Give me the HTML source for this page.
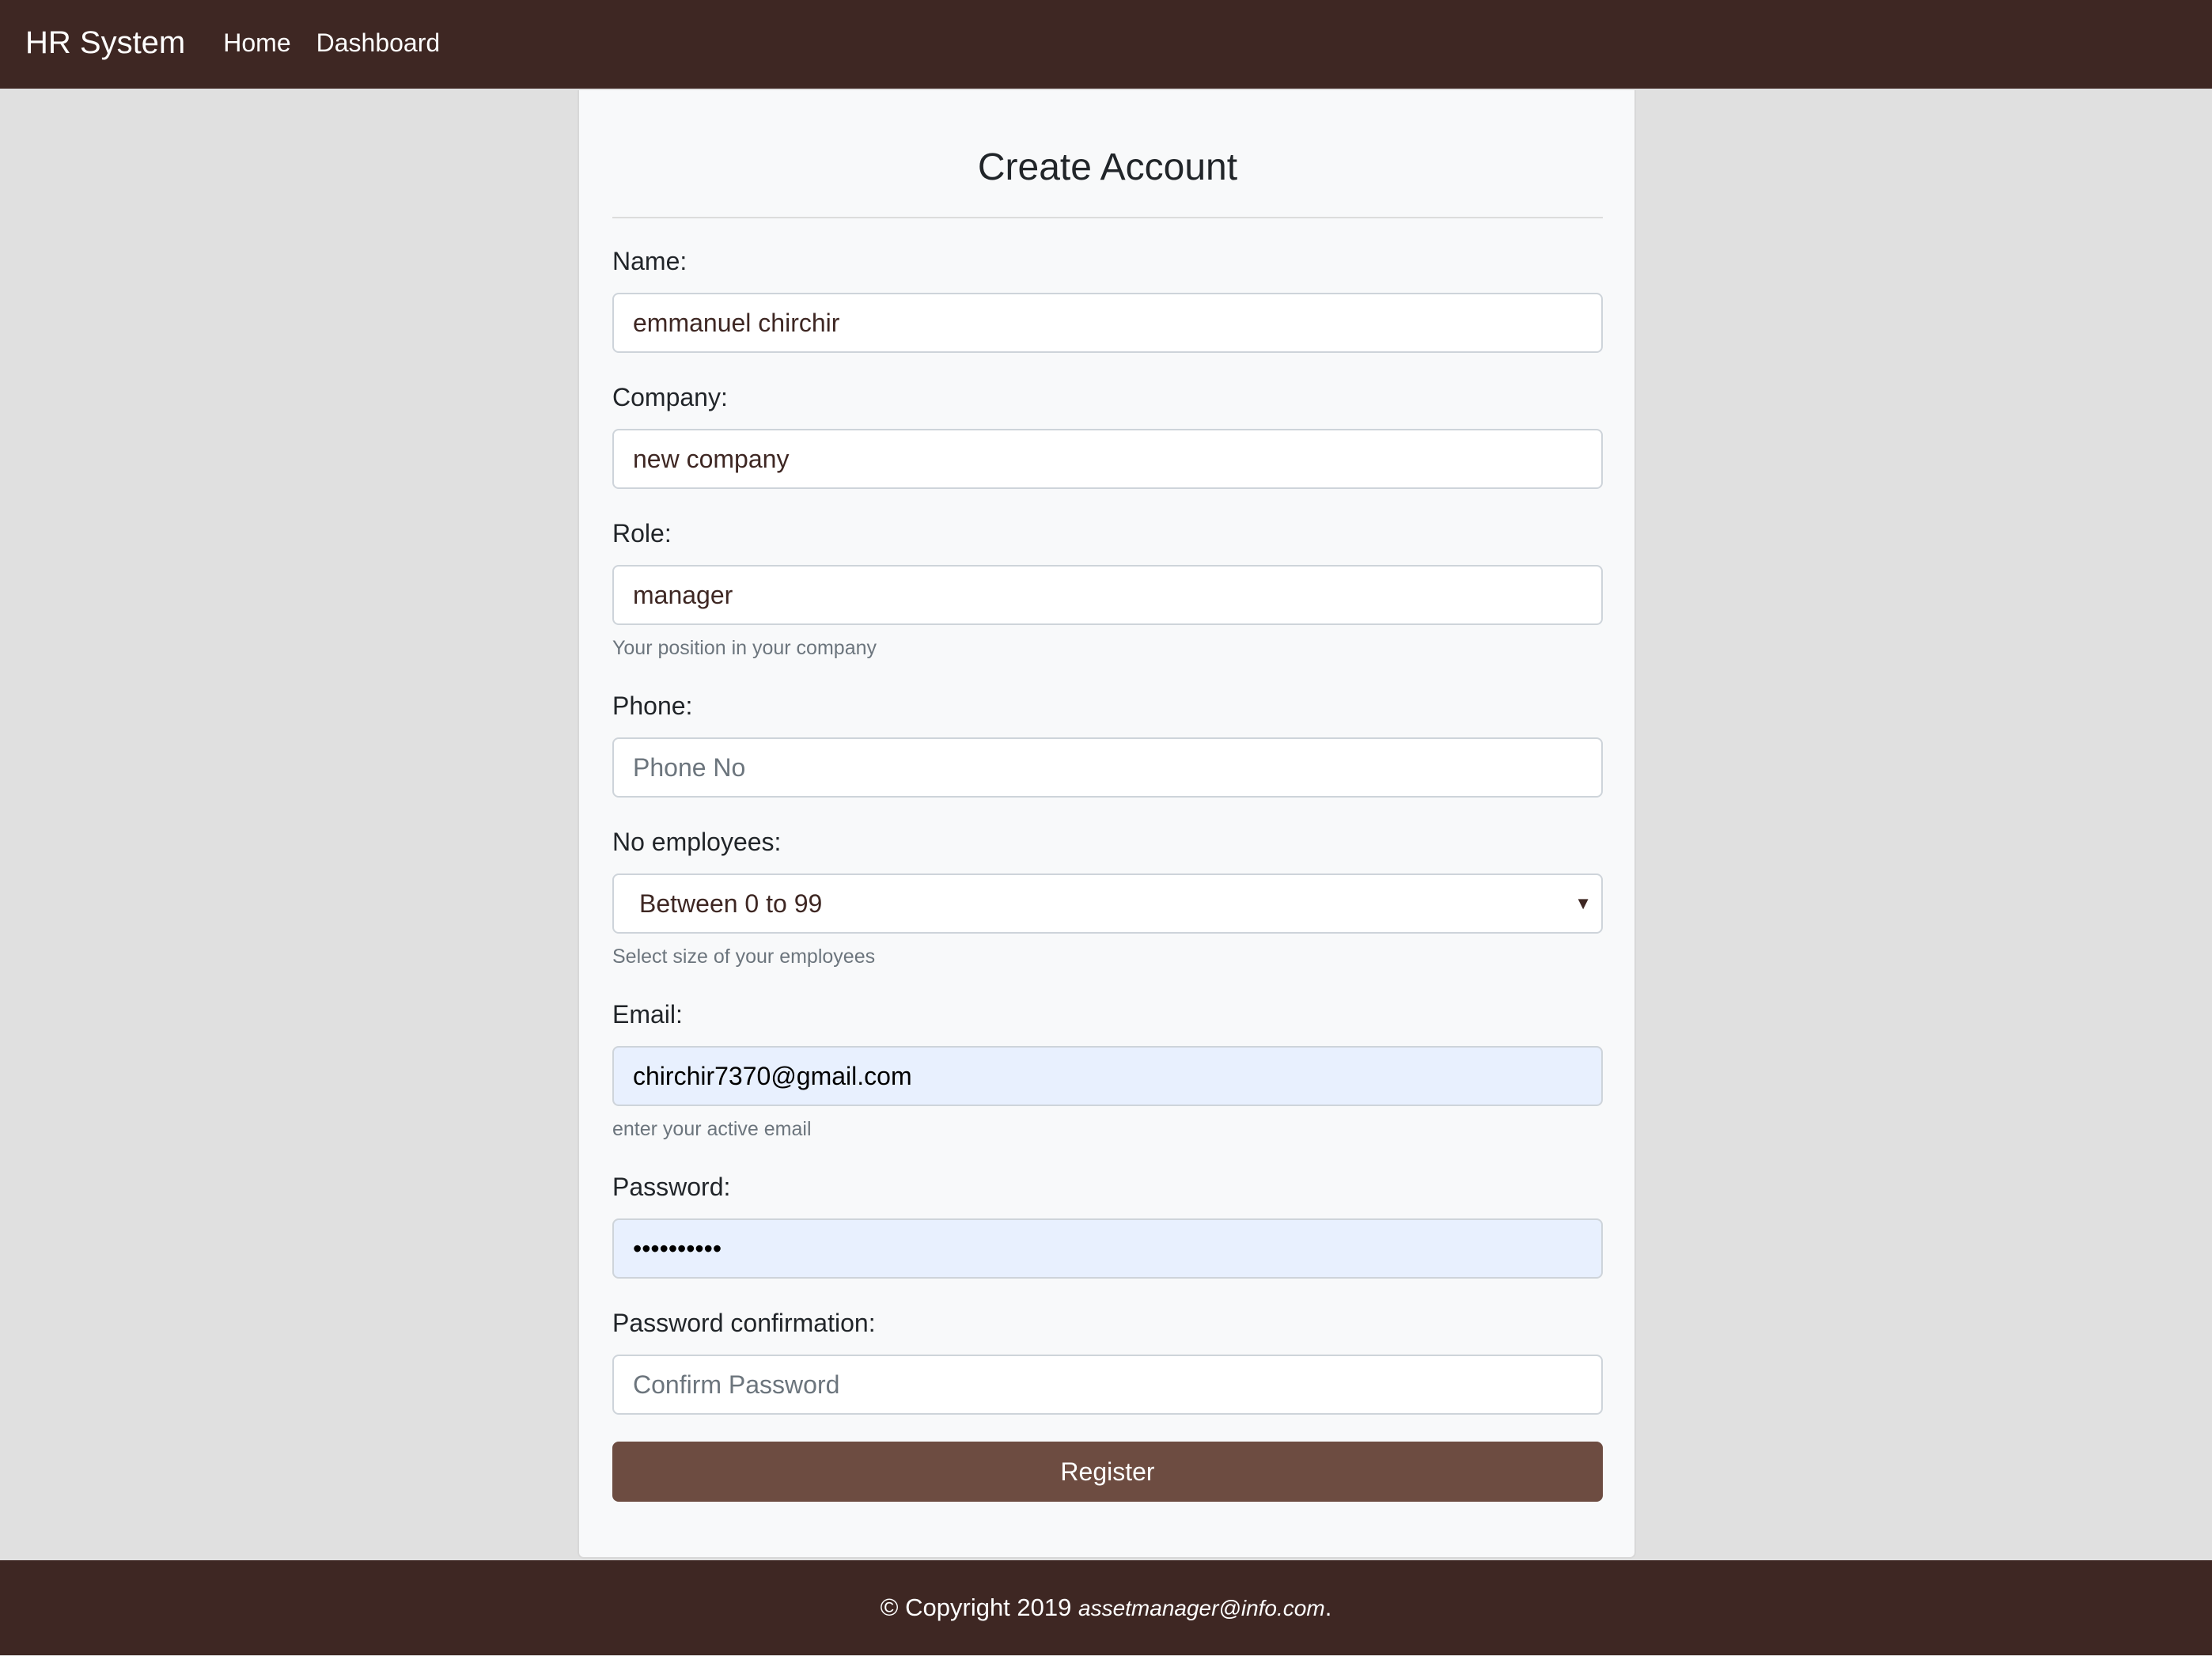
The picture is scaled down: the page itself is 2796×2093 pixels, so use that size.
<!DOCTYPE html>
<html><head><meta charset="utf-8"><style>
html,body{margin:0;padding:0}
body{zoom:2;width:1398px;height:1046px;background:#e0e0e0;font-family:"Liberation Sans",sans-serif;color:#212529;position:relative;overflow:hidden}
.nav{height:56px;background:#3e2723;color:#fff;display:flex;align-items:center}
.brand{font-size:20px;margin-left:16px;margin-right:24px;margin-top:-2px}
.nav a{color:#fff;font-size:16px;margin-right:16px;text-decoration:none;margin-top:-2px}
.card{position:absolute;left:365px;top:57px;height:928px;padding:0 20px 0 21px;background:#f8f9fa;border:1px solid #d8d8d8;border-top:none;border-radius:0 0 4px 4px;box-sizing:border-box;width:669px}
h3{font-weight:400;font-size:24px;text-align:center;margin:34px 0 0;line-height:30px}
hr{border:0;border-top:1px solid #dcdcdc;margin:16px 0 15px}
label{display:block;font-size:16px;line-height:24px;margin-bottom:8px}
.in{height:36px;border:1px solid #ced4da;border-radius:4px;background:#fff;font-size:16px;line-height:36px;padding:0 12px;color:#3e2723;position:relative}
.ph{color:#6c757d}
.fill{background:#e8f0fe;color:#000}
.g{margin-bottom:16px}
small{display:block;font-size:12.5px;color:#6c757d;margin-top:6px;line-height:17px}
.arr{position:absolute;right:6px;top:0;font-size:11px;color:#3e2723}
.btn{height:38px;background:#6d4c41;color:#fff;border-radius:4px;text-align:center;line-height:38px;font-size:16px;margin-top:17px}
.foot{position:absolute;left:0;top:986px;width:1398px;height:60px;background:#3e2723;color:#fff;text-align:center;line-height:60px;font-size:15.5px}
.foot i{font-size:14px}
</style></head><body>
<div class="nav"><span class="brand">HR System</span><a>Home</a><a>Dashboard</a></div>
<div class="card">
<h3>Create Account</h3><hr>
<div class="g"><label>Name:</label><div class="in">emmanuel chirchir</div></div>
<div class="g"><label>Company:</label><div class="in">new company</div></div>
<div class="g"><label>Role:</label><div class="in">manager</div><small>Your position in your company</small></div>
<div class="g"><label>Phone:</label><div class="in ph">Phone No</div></div>
<div class="g"><label>No employees:</label><div class="in" style="padding-left:16px">Between 0 to 99<span class="arr">▼</span></div><small>Select size of your employees</small></div>
<div class="g"><label>Email:</label><div class="in fill">chirchir7370@gmail.com</div><small>enter your active email</small></div>
<div class="g"><label>Password:</label><div class="in fill">••••••••••</div></div>
<div class="g" style="margin-bottom:0"><label>Password confirmation:</label><div class="in ph">Confirm Password</div></div>
<div class="btn">Register</div>
</div>
<div class="foot">© Copyright 2019 <i>assetmanager@info.com</i>.</div>
</body></html>
